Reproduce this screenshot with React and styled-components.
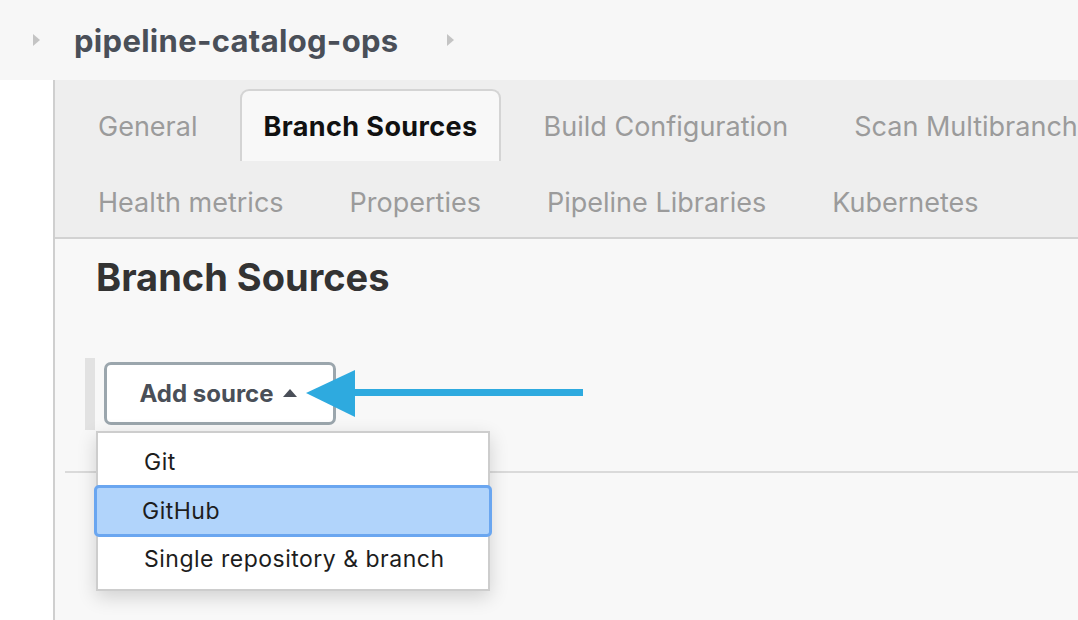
import React from 'react'
import styled, { createGlobalStyle } from 'styled-components'

const Global = createGlobalStyle`
  html, body {
    margin: 0;
    padding: 0;
    background: #f8f8f8;
    font-family: Inter, "Noto Sans", "Liberation Sans", sans-serif;
  }
  #root {
    width: 1078px;
    height: 620px;
    overflow: hidden;
  }
`

const Page = styled.div`
  display: flex;
  flex-direction: column;
  height: 620px;
  position: relative;
`

const TopBar = styled.div`
  height: 80px;
  flex: none;
  display: flex;
  align-items: center;
  padding-left: 33px;
  background: #f7f7f7;
`

const Chevron = styled.span`
  width: 0;
  height: 0;
  border-top: 6px solid transparent;
  border-bottom: 6px solid transparent;
  border-left: 7px solid #c4c4c4;
  margin: ${p => p.$m};
`

const Title = styled.h1`
  margin: 0;
  font-size: 31px;
  font-weight: 700;
  color: #4a4f58;
  letter-spacing: 0.3px;
`

const Body = styled.div`
  flex: 1;
  display: flex;
`

const Side = styled.div`
  width: 53px;
  flex: none;
  background: #fff;
  border-right: 2px solid #cfcfcf;
`

const Content = styled.div`
  flex: 1;
  position: relative;
  background: #f8f8f8;
  display: flex;
  flex-direction: column;
  min-width: 0;
`

const TabBar = styled.div`
  background: #eeeeee;
  padding: 9px 0 0 20px;
  border-bottom: 2px solid #d2d2d2;
  display: flex;
  flex-direction: column;
  gap: 4px;
  overflow: hidden;
`

const TabRow = styled.div`
  display: flex;
  gap: 20px;
  height: 72px;
  white-space: nowrap;
`

const Tab = styled.div`
  display: flex;
  align-items: center;
  padding: 0 21px;
  font-size: 27px;
  letter-spacing: ${p => (p.$active ? '0.4px' : '0')};
  color: ${p => (p.$active ? '#111' : '#9b9b9b')};
  font-weight: ${p => (p.$active ? 700 : 400)};
  background: ${p => (p.$active ? '#f8f8f8' : 'transparent')};
  border: 2px solid ${p => (p.$active ? '#d4d4d4' : 'transparent')};
  border-bottom: none;
  border-radius: 9px 9px 0 0;
`

const Heading = styled.h2`
  margin: 15px 0 0 41px;
  font-size: 38px;
  font-weight: 700;
  color: #333;
`

const Section = styled.div`
  margin: 58px 0 0 30px;
  display: flex;
  gap: 9px;
  height: 72px;
  position: relative;
`

const Bar = styled.div`
  width: 10px;
  background: #e2e2e2;
`

const AddButton = styled.button`
  margin-top: 4px;
  width: 232px;
  height: 63px;
  border: 3px solid #9ba6ad;
  border-radius: 7px;
  background: #fff;
  font-family: inherit;
  font-size: 24px;
  font-weight: 700;
  color: #4a4f58;
  display: flex;
  align-items: center;
  justify-content: center;
  gap: 9px;
  padding: 0 4px 0 0;
`

const Caret = styled.span`
  width: 0;
  height: 0;
  border-left: 7px solid transparent;
  border-right: 7px solid transparent;
  border-bottom: 8px solid #4a4f58;
  margin-top: -2px;
`

const Rule = styled.div`
  margin: 41px 0 0 10px;
  border-top: 2px solid #dadada;
`

const Menu = styled.div`
  position: absolute;
  left: 11px;
  top: 73px;
  width: 390px;
  padding: 5px 0 8px;
  background: #fff;
  border: 2px solid #cdcdcd;
  box-shadow: 0 6px 18px rgba(0, 0, 0, 0.16);
  z-index: 2;
`

const Item = styled.div`
  height: ${p => p.$h}px;
  display: flex;
  align-items: center;
  padding-left: ${p => (p.$hl ? '45px' : '46px')};
  font-size: 23px;
  color: #1d1d1d;
  letter-spacing: 0.5px;
  box-sizing: border-box;
  ${p =>
    p.$hl &&
    `
    margin: 0 -4px;
    background: #b1d4fb;
    border: 3px solid #6aa6f0;
    border-radius: 5px;
  `}
`

const Pointer = styled.svg`
  position: absolute;
  left: 305px;
  top: 368px;
  z-index: 3;
`

const tabsRow1 = ['General', 'Branch Sources', 'Build Configuration', 'Scan Multibranch Pipeline Triggers']
const tabsRow2 = ['Health metrics', 'Properties', 'Pipeline Libraries', 'Kubernetes']

export default function App() {
  return (
    <Page>
      <Global />
      <TopBar>
        <Chevron $m="0 34px 0 0" />
        <Title>pipeline-catalog-ops</Title>
        <Chevron $m="0 0 0 49px" />
      </TopBar>
      <Body>
        <Side />
        <Content>
          <TabBar>
            <TabRow>
              {tabsRow1.map(t => (
                <Tab key={t} $active={t === 'Branch Sources'}>{t}</Tab>
              ))}
            </TabRow>
            <TabRow>
              {tabsRow2.map(t => (
                <Tab key={t}>{t}</Tab>
              ))}
            </TabRow>
          </TabBar>
          <Heading>Branch Sources</Heading>
          <Section>
            <Bar />
            <AddButton>
              Add source <Caret />
            </AddButton>
            <Menu>
              <Item $h={47}>Git</Item>
              <Item $h={52} $hl>GitHub</Item>
              <Item $h={44}>Single repository &amp; branch</Item>
            </Menu>
          </Section>
          <Rule />
        </Content>
      </Body>
      <Pointer width="280" height="52" viewBox="0 0 280 52">
        <polygon points="1,25 50,2 50,49" fill="#2eaadf" />
        <rect x="48" y="21" width="230" height="7" fill="#2eaadf" />
      </Pointer>
    </Page>
  )
}
